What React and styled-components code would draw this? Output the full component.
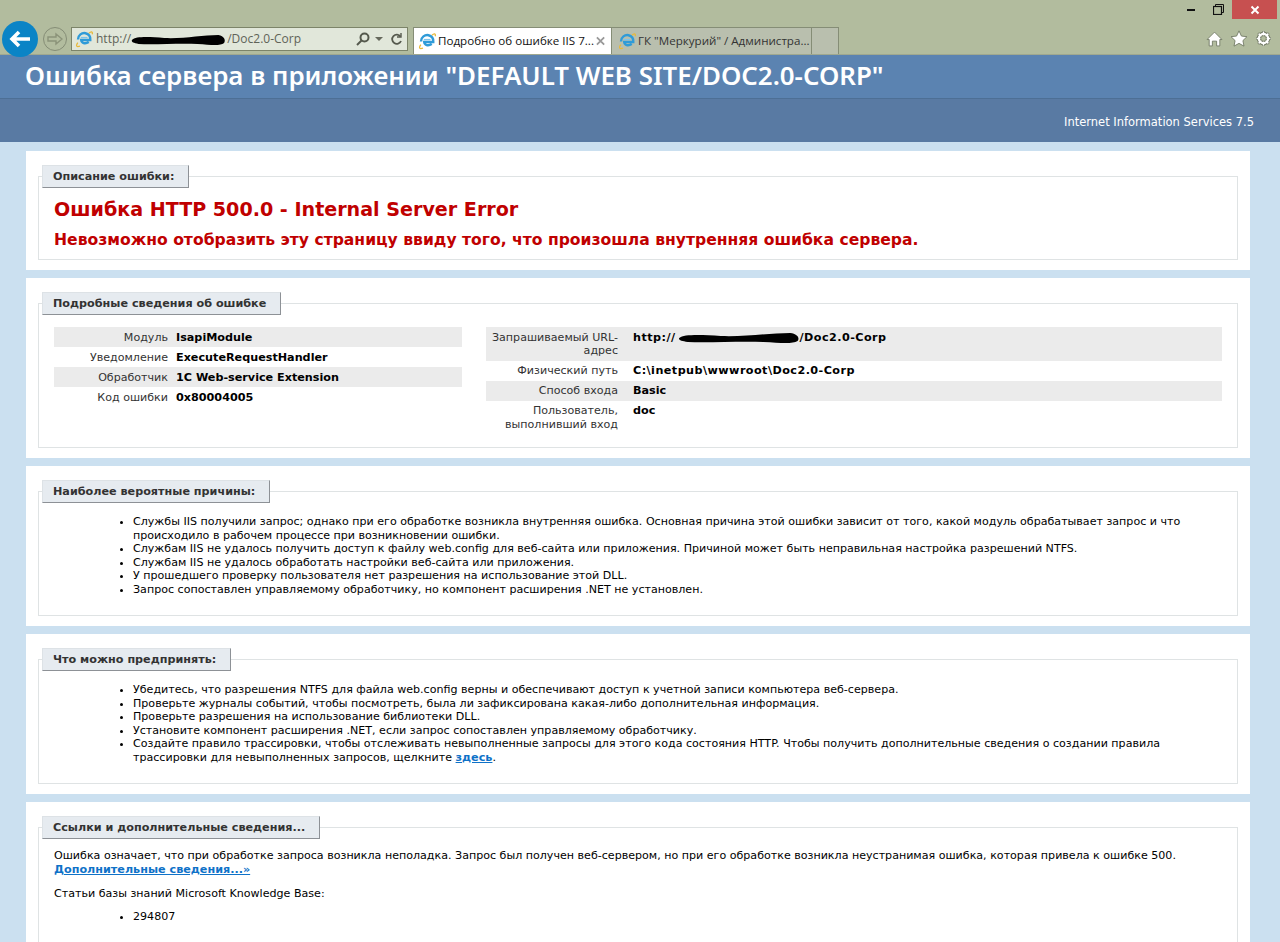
import React from 'react';
import styled, { createGlobalStyle } from 'styled-components';

const Global = createGlobalStyle`
  html, body { margin: 0; padding: 0; background: #cbe0f0; }
  body { font-family: "DejaVu Sans", Verdana, sans-serif; font-size: 11.08px; line-height: 13.5px; color: #000; overflow: hidden; }
`;

const Page = styled.div`
  width: 1280px;
  height: 942px;
  overflow: hidden;
  background: #cbe0f0;
`;

const Chrome = styled.div`
  height: 54px;
  background: #b2bc9e;
  border-bottom: 1px solid #a0a88f;
  display: flex;
  flex-direction: column;
`;

const WindowRow = styled.div`
  height: 18px;
  display: flex;
  justify-content: flex-end;
  align-items: flex-start;
  padding-right: 3px;
`;

const WinButton = styled.div`
  width: ${p => p.$w}px;
  height: 19px;
  display: flex;
  align-items: center;
  justify-content: center;
  background: ${p => p.$close ? '#c75050' : 'transparent'};
`;

const NavRow = styled.div`
  flex: 1;
  display: flex;
  align-items: flex-end;
  padding-left: 2px;
`;

const BackCircle = styled.div`
  width: 36px;
  height: 36px;
  margin-bottom: -3px;
  border-radius: 50%;
  background: #0a84c6;
  display: flex;
  align-items: center;
  justify-content: center;
  flex: none;
`;

const ForwardCircle = styled.div`
  box-sizing: border-box;
  width: 24px;
  height: 24px;
  margin: 0 4px 3px 5px;
  border-radius: 50%;
  border: 1px solid #858d76;
  display: flex;
  align-items: center;
  justify-content: center;
  flex: none;
`;

const AddressBar = styled.div`
  width: 337px;
  height: 24px;
  margin-bottom: 3px;
  box-sizing: border-box;
  border: 1px solid #7c8469;
  background: #e1e7da;
  display: flex;
  align-items: center;
  padding: 0 4px 0 3px;
  font-family: "Open Sans", sans-serif;
  font-size: 12px;
  color: #5f6358;
  flex: none;
`;

const AddressText = styled.span`
  margin-left: 3px;
  flex: 1;
  position: relative;
  white-space: nowrap;
`;

const Scribble = styled.svg`
  position: absolute;
  left: ${p => p.$left}px;
  top: ${p => p.$top}px;
`;

const AddressTools = styled.div`
  display: flex;
  align-items: center;
`;

const Caret = styled.svg`
  margin: 0 7px 0 5px;
`;

const Tabs = styled.div`
  display: flex;
  align-items: flex-end;
  margin-left: 5px;
  height: 27px;
`;

const Tab = styled.div`
  box-sizing: border-box;
  width: ${p => p.$w}px;
  height: 27px;
  display: flex;
  align-items: center;
  gap: 2px;
  padding: 0 6px 0 ${p => p.$first ? 4 : 6}px;
  font-family: "Open Sans", sans-serif;
  font-size: 11.6px;
  white-space: nowrap;
  overflow: hidden;
  color: ${p => p.$active ? '#111' : '#333'};
  background: ${p => p.$active ? '#fff' : '#b9bfae'};
  border: 1px solid #858d76;
  border-bottom: none;
  border-left-width: ${p => p.$first ? 1 : 0}px;
`;

const TabLabel = styled.span`
  flex: 1;
`;

const ToolIcons = styled.div`
  margin-left: auto;
  display: flex;
  align-items: center;
  gap: 7px;
  padding: 0 8px 7px 0;
`;

const TitleBand = styled.div`
  height: 43px;
  background: #5b83b1;
  border-bottom: 1px solid #4d6f95;
  display: flex;
  align-items: center;
  padding-left: 25px;
`;

const Title = styled.h1`
  margin: 0 0 4px 0;
  font-family: "Noto Sans", sans-serif;
  font-weight: 600;
  font-size: 25.9px;
  line-height: 38px;
  color: #fff;
  white-space: nowrap;
`;

const SubBand = styled.div`
  height: 43px;
  background: #597aa3;
  display: flex;
  align-items: center;
  justify-content: flex-end;
  padding: 4px 26px 0 0;
  box-sizing: border-box;
  color: #fff;
  font-size: 11.5px;
`;

const Content = styled.div`
  padding: 9px 30px 0 26px;
  display: flex;
  flex-direction: column;
  gap: 8px;
`;

const Panel = styled.section`
  background: #fff;
  padding: 14px 12px 10px;
`;

const Field = styled.fieldset`
  margin: 0;
  padding: 0 15px;
  border: 1px solid #dfe3e4;
  min-width: 0;
`;

const Legend = styled.legend`
  box-sizing: border-box;
  height: 23px;
  margin-left: -12px;
  padding: 0 14px 0 10px;
  background: #e6ebf0;
  border-top: 1px solid #dde2e6;
  border-left: 1px solid #dde2e6;
  border-right: 1px solid #8d9196;
  border-bottom: 1px solid #8d9196;
  font-size: 11.2px;
  font-weight: bold;
  color: #333;
  line-height: 22px;
`;

const ErrorTitle = styled.h2`
  margin: 10px 0 0;
  font-size: 19.1px;
  line-height: 24px;
  font-weight: bold;
  color: #c00000;
`;

const ErrorSub = styled.h3`
  margin: 8px 0 9px;
  font-size: 15.6px;
  line-height: 20px;
  font-weight: bold;
  color: #c00000;
`;

const DetailGrid = styled.div`
  display: flex;
  gap: 24px;
  padding: 12px 0 13px;
  box-sizing: border-box;
`;

const DetailTable = styled.div`
  width: ${p => p.$w}px;
`;

const DetailRow = styled.div`
  display: grid;
  grid-template-columns: ${p => p.$label}px 1fr;
  column-gap: ${p => p.$gap}px;
  padding: 3.5px 0 3px;
  background: ${p => p.$shade ? '#ebebeb' : 'transparent'};
`;

const DetailLabel = styled.div`
  text-align: right;
  color: #333;
`;

const DetailValue = styled.div`
  font-size: 11.2px;
  font-weight: bold;
  position: relative;
  white-space: nowrap;
  letter-spacing: ${p => p.$wide ? 0.45 : 0}px;
`;

const RedactedTail = styled.span`
  margin-left: ${p => p.$gap}px;
`;

const List = styled.ul`
  margin: ${p => p.$mt ?? 12}px 0 ${p => p.$mb ?? 19}px 0;
  padding-left: 79px;
`;

const Text = styled.p`
  margin: ${p => p.$mt ?? 0}px 0 0;
`;

const MoreLink = styled.a`
  color: #0f72c8;
  font-size: 11.2px;
  font-weight: bold;
  text-decoration: underline;
`;

const IeLogo = ({ size = 18 }) => (
  <svg width={size} height={size} viewBox="0 0 18 18" style={{ flex: 'none' }}>
    <path d="M3 9.5C3 5 7 2.5 10.5 3.2C14 3.9 15.5 6.6 15.3 10H6.2C6.4 13 10 14.4 13.8 12" fill="none" stroke="#2f9bd8" strokeWidth="2.4" />
    <path d="M5.8 7.6H12.5" stroke="#7cc4ea" strokeWidth="1.4" />
    <path d="M14 3.2C16 1.2 18 1.4 17.2 4.2M2.8 12.6C0.6 15.8 1.4 17.4 5 16.2" fill="none" stroke="#e8b93a" strokeWidth="1.3" />
  </svg>
);

const Redaction = ({ left, top, width }) => (
  <Scribble $left={left} $top={top} width={width} height="14" viewBox="0 0 100 14" preserveAspectRatio="none">
    <path d="M1 7C5 3 20 4 35 5C55 6 75 2 92 2C98 3 100 7 98 10C94 13 85 12 70 11C50 10 25 12 8 11C3 10 0 9 1 7Z" fill="#000" />
  </Scribble>
);

const App = () => (
  <Page>
    <Global />
    <Chrome>
      <WindowRow>
        <WinButton $w={27}>
          <svg width="9" height="3"><rect width="8" height="2" y="1" fill="#111" /></svg>
        </WinButton>
        <WinButton $w={27}>
          <svg width="11" height="11" viewBox="0 0 11 11" fill="none" stroke="#111">
            <rect x="0.5" y="2.5" width="8" height="8" strokeWidth="1.2" />
            <path d="M2.5 2V0.5H10.5V8.5H9" />
          </svg>
        </WinButton>
        <WinButton $w={45} $close>
          <svg width="10" height="10" viewBox="0 0 10 10"><path d="M1.5 1.5L8.5 8.5M8.5 1.5L1.5 8.5" stroke="#fff" strokeWidth="2" /></svg>
        </WinButton>
      </WindowRow>
      <NavRow>
        <BackCircle>
          <svg width="22" height="18" viewBox="0 0 22 18" fill="none" stroke="#fff" strokeWidth="3.6">
            <path d="M21 9H3M10 2L3 9L10 16" />
          </svg>
        </BackCircle>
        <ForwardCircle>
          <svg width="16" height="14" viewBox="0 0 16 14" fill="none" stroke="#8b9379" strokeWidth="1.4">
            <path d="M1 5H9V2L15 7L9 12V9H1Z" />
          </svg>
        </ForwardCircle>
        <AddressBar>
          <IeLogo />
          <AddressText>
            http://<Redaction left={35} top={1} width={95} />
            <RedactedTail $gap={96}>/Doc2.0-Corp</RedactedTail>
          </AddressText>
          <AddressTools>
            <svg width="14" height="14" viewBox="0 0 14 14" fill="none" stroke="#55594d" strokeWidth="2">
              <circle cx="8.5" cy="5.5" r="4" />
              <path d="M5.5 8.5L1 13" />
            </svg>
            <Caret width="8" height="5"><path d="M0 0H8L4 4Z" fill="#66695c" /></Caret>
            <svg width="13" height="14" viewBox="0 0 13 14" fill="none" stroke="#55594d" strokeWidth="1.8">
              <path d="M10.5 4.5A4.6 4.6 0 1 0 11 9" />
              <path d="M11 1V5H7" strokeWidth="1.4" />
            </svg>
          </AddressTools>
        </AddressBar>
        <Tabs>
          <Tab $active $first $w={199}>
            <IeLogo />
            <TabLabel>Подробно об ошибке IIS 7...</TabLabel>
            <svg width="10" height="10" viewBox="0 0 10 10"><path d="M1 1L9 9M9 1L1 9" stroke="#999" strokeWidth="2" /></svg>
          </Tab>
          <Tab $w={200}>
            <IeLogo />
            <TabLabel>ГК "Меркурий" / Администра...</TabLabel>
          </Tab>
          <Tab $w={27} />
        </Tabs>
        <ToolIcons>
          <svg width="17" height="16" viewBox="0 0 16 15">
            <path d="M8 1L15 8H13V14H10V9.5H6V14H3V8H1Z" fill="#fff" stroke="#6d7560" strokeWidth="0.8" />
          </svg>
          <svg width="18" height="17" viewBox="0 0 17 16">
            <path d="M8.5 0.8L10.8 5.7L16 6.3L12.2 10L13.2 15.2L8.5 12.6L3.8 15.2L4.8 10L1 6.3L6.2 5.7Z" fill="#fff" stroke="#6d7560" strokeWidth="0.8" />
          </svg>
          <svg width="17" height="17" viewBox="0 0 16 16" fill="none">
            <circle cx="8" cy="8" r="4.6" stroke="#6d7560" strokeWidth="3.4" />
            <path d="M8 1V15M1 8H15M3 3L13 13M13 3L3 13" stroke="#6d7560" strokeWidth="2.4" />
            <path d="M8 1.5V14.5M1.5 8H14.5M3.4 3.4L12.6 12.6M12.6 3.4L3.4 12.6" stroke="#fff" strokeWidth="1.4" />
            <circle cx="8" cy="8" r="4.4" stroke="#fff" strokeWidth="2" />
            <circle cx="8" cy="8" r="2.6" fill="#b2bc9e" stroke="#6d7560" strokeWidth="0.7" />
          </svg>
        </ToolIcons>
      </NavRow>
    </Chrome>
    <TitleBand>
      <Title>Ошибка сервера в приложении "DEFAULT WEB SITE/DOC2.0-CORP"</Title>
    </TitleBand>
    <SubBand>Internet Information Services 7.5</SubBand>
    <Content>
      <Panel>
        <Field>
          <Legend>Описание ошибки:</Legend>
          <ErrorTitle>Ошибка HTTP 500.0 - Internal Server Error</ErrorTitle>
          <ErrorSub>Невозможно отобразить эту страницу ввиду того, что произошла внутренняя ошибка сервера.</ErrorSub>
        </Field>
      </Panel>
      <Panel>
        <Field>
          <Legend>Подробные сведения об ошибке</Legend>
          <DetailGrid>
            <DetailTable $w={408}>
              <DetailRow $shade $label={114} $gap={8}><DetailLabel>Модуль</DetailLabel><DetailValue>IsapiModule</DetailValue></DetailRow>
              <DetailRow $label={114} $gap={8}><DetailLabel>Уведомление</DetailLabel><DetailValue>ExecuteRequestHandler</DetailValue></DetailRow>
              <DetailRow $shade $label={114} $gap={8}><DetailLabel>Обработчик</DetailLabel><DetailValue>1C Web-service Extension</DetailValue></DetailRow>
              <DetailRow $label={114} $gap={8}><DetailLabel>Код ошибки</DetailLabel><DetailValue>0x80004005</DetailValue></DetailRow>
            </DetailTable>
            <DetailTable $w={736}>
              <DetailRow $shade $label={132} $gap={15}>
                <DetailLabel>Запрашиваемый URL-адрес</DetailLabel>
                <DetailValue $wide>
                  http://<Redaction left={45} top={0} width={122} />
                  <RedactedTail $gap={124}>/Doc2.0-Corp</RedactedTail>
                </DetailValue>
              </DetailRow>
              <DetailRow $label={132} $gap={15}><DetailLabel>Физический путь</DetailLabel><DetailValue $wide>C:\inetpub\wwwroot\Doc2.0-Corp</DetailValue></DetailRow>
              <DetailRow $shade $label={132} $gap={15}><DetailLabel>Способ входа</DetailLabel><DetailValue>Basic</DetailValue></DetailRow>
              <DetailRow $label={132} $gap={15}><DetailLabel>Пользователь, выполнивший вход</DetailLabel><DetailValue>doc</DetailValue></DetailRow>
            </DetailTable>
          </DetailGrid>
        </Field>
      </Panel>
      <Panel>
        <Field>
          <Legend>Наиболее вероятные причины:</Legend>
          <List>
            <li>Службы IIS получили запрос; однако при его обработке возникла внутренняя ошибка. Основная причина этой ошибки зависит от того, какой модуль обрабатывает запрос и что происходило в рабочем процессе при возникновении ошибки.</li>
            <li>Службам IIS не удалось получить доступ к файлу web.config для веб-сайта или приложения. Причиной может быть неправильная настройка разрешений NTFS.</li>
            <li>Службам IIS не удалось обработать настройки веб-сайта или приложения.</li>
            <li>У прошедшего проверку пользователя нет разрешения на использование этой DLL.</li>
            <li>Запрос сопоставлен управляемому обработчику, но компонент расширения .NET не установлен.</li>
          </List>
        </Field>
      </Panel>
      <Panel>
        <Field>
          <Legend>Что можно предпринять:</Legend>
          <List>
            <li>Убедитесь, что разрешения NTFS для файла web.config верны и обеспечивают доступ к учетной записи компьютера веб-сервера.</li>
            <li>Проверьте журналы событий, чтобы посмотреть, была ли зафиксирована какая-либо дополнительная информация.</li>
            <li>Проверьте разрешения на использование библиотеки DLL.</li>
            <li>Установите компонент расширения .NET, если запрос сопоставлен управляемому обработчику.</li>
            <li>Создайте правило трассировки, чтобы отслеживать невыполненные запросы для этого кода состояния HTTP. Чтобы получить дополнительные сведения о создании правила трассировки для невыполненных запросов, щелкните <MoreLink>здесь</MoreLink>.</li>
          </List>
        </Field>
      </Panel>
      <Panel>
        <Field>
          <Legend>Ссылки и дополнительные сведения...</Legend>
          <Text $mt={10}>Ошибка означает, что при обработке запроса возникла неполадка. Запрос был получен веб-сервером, но при его обработке возникла неустранимая ошибка, которая привела к ошибке 500.</Text>
          <MoreLink>Дополнительные сведения...»</MoreLink>
          <Text $mt={11}>Статьи базы знаний Microsoft Knowledge Base:</Text>
          <List $mt={9} $mb={40}>
            <li>294807</li>
          </List>
        </Field>
      </Panel>
    </Content>
  </Page>
);

export default App;
